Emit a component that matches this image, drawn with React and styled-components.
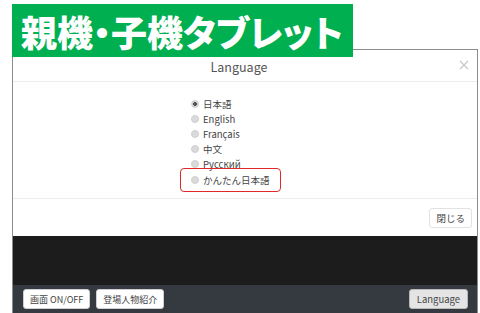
import React from 'react'
import styled, { createGlobalStyle } from 'styled-components'

const GlobalStyle = createGlobalStyle`
  html, body {
    margin: 0;
    padding: 0;
    background: #fff;
  }
  body {
    font-family: "Noto Sans CJK JP", "Noto Sans", sans-serif;
  }
`

const Page = styled.div`
  position: relative;
  width: 480px;
  height: 313px;
  overflow: hidden;
  padding-top: 49px;
  box-sizing: border-box;
`

const Banner = styled.div`
  position: absolute;
  left: 12px;
  top: 4px;
  width: 341px;
  height: 53px;
  background: #00b050;
  color: #fff;
  display: flex;
  align-items: center;
  padding-left: 9px;
  box-sizing: border-box;
  font-size: 36px;
  font-weight: 900;
  font-feature-settings: "palt";
  white-space: nowrap;
  z-index: 2;
`

const Frame = styled.div`
  margin-left: 12px;
  width: 466px;
  height: 264px;
  box-sizing: border-box;
  border: 1px solid #8c8c8c;
  border-bottom: none;
  background: #1c1c1c;
  display: flex;
  flex-direction: column;
`

const Modal = styled.div`
  background: #fff;
  height: 186px;
  display: flex;
  flex-direction: column;
`

const ModalHeader = styled.div`
  height: 32px;
  border-bottom: 1px solid #ececec;
  display: grid;
  grid-template-columns: 1fr auto 1fr;
  align-items: center;
  padding-top: 2px;
  box-sizing: border-box;
`

const Title = styled.div`
  grid-column: 2;
  font-size: 12.5px;
  color: #555;
  margin-right: 12px;
`

const CloseX = styled.div`
  grid-column: 3;
  justify-self: end;
  margin-right: 8px;
  margin-top: -4px;
  display: flex;
`

const ModalBody = styled.div`
  flex: 1;
  padding: 14px 0 0 178px;
  border-bottom: 1px solid #ececec;
`

const Option = styled.div`
  position: relative;
  display: flex;
  align-items: center;
  gap: 4px;
  height: 15.2px;
  width: max-content;
  font-size: 9.5px;
  color: #444;

  ${p => p.$marked && `
    &::after {
      content: "";
      position: absolute;
      left: -11px;
      right: -11px;
      top: -4px;
      bottom: -5px;
      border: 1.5px solid #e02828;
      border-radius: 4px;
    }
  `}
`

const Dot = styled.span`
  width: 8px;
  height: 8px;
  border-radius: 50%;
  box-sizing: border-box;
  background: ${p => (p.$checked ? 'radial-gradient(circle, #555 0 1.6px, #d6d6d6 2.2px)' : '#dadada')};
  border: 1px solid #cfcfcf;
`

const ModalFooter = styled.div`
  height: 37px;
  display: flex;
  align-items: center;
  justify-content: flex-end;
  padding-right: 5px;
`

const Button = styled.div`
  height: 20px;
  display: flex;
  align-items: center;
  padding: 0 ${p => p.$pad || 6}px;
  box-sizing: border-box;
  border-radius: 3px;
  font-size: ${p => p.$size || 9}px;
  color: #444;
  background: ${p => (p.$active ? '#e4e4e4' : '#fff')};
  border: 1px solid ${p => (p.$active ? '#b8b8b8' : p.$light ? '#e2e2e2' : '#cfcfcf')};
  white-space: nowrap;
`

const Screen = styled.div`
  flex: 1;
  background: #1c1c1c;
`

const Toolbar = styled.div`
  height: 28px;
  background: #353a41;
  display: flex;
  align-items: center;
  gap: 6px;
  padding: 0 9px 0 10px;
`

const Spacer = styled.div`
  flex: 1;
`

const languages = ['日本語', 'English', 'Français', '中文', 'Русский', 'かんたん日本語']

export default function App() {
  return (
    <Page>
      <GlobalStyle />
      <Banner>親機・子機タブレット</Banner>
      <Frame>
        <Modal>
          <ModalHeader>
            <Title>Language</Title>
            <CloseX>
              <svg width="10" height="10" viewBox="0 0 10 10">
                <path d="M1 1L9 9M9 1L1 9" stroke="#c9c9c9" strokeWidth="1.3" />
              </svg>
            </CloseX>
          </ModalHeader>
          <ModalBody>
            {languages.map((lang, i) => (
              <Option key={lang} $marked={i === languages.length - 1}>
                <Dot $checked={i === 0} />
                {lang}
              </Option>
            ))}
          </ModalBody>
          <ModalFooter>
            <Button $light $size={9.5}>閉じる</Button>
          </ModalFooter>
        </Modal>
        <Screen />
        <Toolbar>
          <Button>画面 ON/OFF</Button>
          <Button>登場人物紹介</Button>
          <Spacer />
          <Button $active $size={9.5} $pad={7}>Language</Button>
        </Toolbar>
      </Frame>
    </Page>
  )
}
